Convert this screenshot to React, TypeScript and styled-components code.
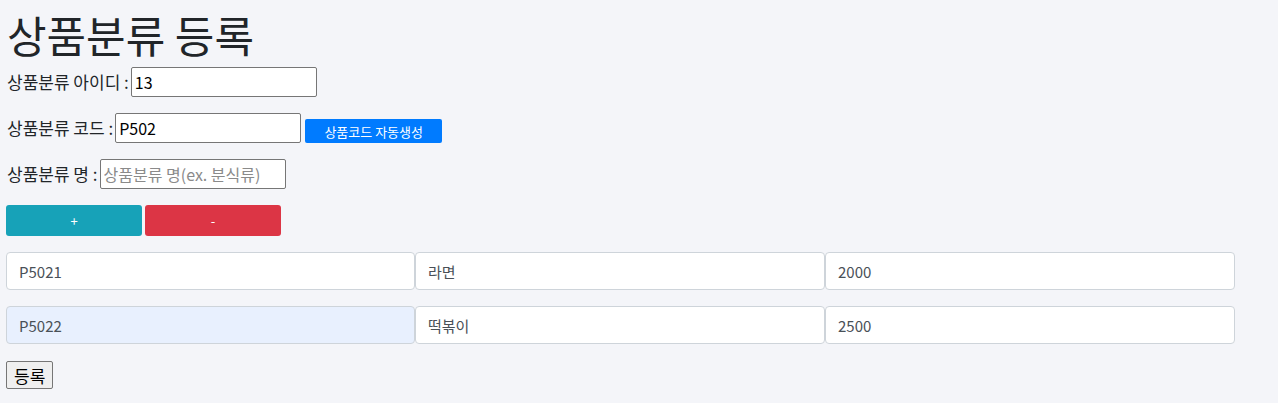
import React from 'react'
import styled, { createGlobalStyle } from 'styled-components'

const GlobalStyle = createGlobalStyle`
    body {
        margin: 0;
        background: #f4f5f9;
        font-family: 'Noto Sans CJK KR', 'Noto Sans', sans-serif;
        color: #212529;
    }
`

const Page = styled.div`
    padding: 0 6px;
    display: flex;
    flex-direction: column;
    align-items: flex-start;
`

const Title = styled.h1`
    margin: 8px 0 0 1px;
    font-size: 43px;
    font-weight: 400;
    line-height: 52px;
    color: #212529;
`

const FieldRow = styled.div<{ gap: number }>`
    display: flex;
    align-items: center;
    margin-top: ${p => p.gap}px;
    padding-left: 1px;
`

const Label = styled.span`
    font-size: 17px;
    line-height: 20px;
    margin-right: 2px;
    color: #212529;
`

const TextInput = styled.input`
    box-sizing: border-box;
    width: 186px;
    height: 30px;
    border: 1px solid #767676;
    border-radius: 2px;
    padding: 1px 3px;
    font-family: 'Noto Sans CJK KR', 'Noto Sans', sans-serif;
    font-size: 16px;
    color: #000;
    background: #fff;
    outline: none;
    &::placeholder {
        color: #8a8a8a;
    }
`

const AutoButton = styled.button`
    align-self: flex-end;
    margin-left: 4px;
    width: 137px;
    height: 24px;
    border: none;
    border-radius: 2px;
    background: #007bff;
    color: #fff;
    font-family: 'Noto Sans CJK KR', 'Noto Sans', sans-serif;
    font-size: 13px;
    padding: 0;
`

const ButtonRow = styled.div`
    display: flex;
    gap: 3px;
    margin-top: 16px;
`

const ActionButton = styled.button<{ tone: string }>`
    width: 136px;
    height: 31px;
    border: none;
    border-radius: 3px;
    background: ${p => p.tone};
    color: #fff;
    font-family: 'Noto Sans CJK KR', 'Noto Sans', sans-serif;
    font-size: 13px;
    padding: 0;
`

const ItemRow = styled.div`
    display: grid;
    grid-template-columns: 409px 410px 410px;
    margin-top: 16px;
`

const ItemInput = styled.input<{ filled?: boolean }>`
    box-sizing: border-box;
    height: 38px;
    border: 1px solid #ced4da;
    border-radius: 4px;
    padding: 0 12px;
    font-family: 'Noto Sans CJK KR', 'Noto Sans', sans-serif;
    font-size: 15px;
    color: #495057;
    background: ${p => (p.filled ? '#e8f0fe' : '#fff')};
    outline: none;
`

const SubmitButton = styled.button`
    margin-top: 17px;
    height: 28px;
    padding: 0 7px;
    border: 1px solid #767676;
    border-radius: 2px;
    background: #efefef;
    color: #000;
    font-family: 'Noto Sans CJK KR', 'Noto Sans', sans-serif;
    font-size: 17px;
`

const items = [
    { code: 'P5021', name: '라면', price: '2000', filled: false },
    { code: 'P5022', name: '떡볶이', price: '2500', filled: true },
]

export default function App() {
    return (
        <Page>
            <GlobalStyle />
            <Title>상품분류 등록</Title>
            <FieldRow gap={7}>
                <Label>상품분류 아이디 :</Label>
                <TextInput defaultValue="13" />
            </FieldRow>
            <FieldRow gap={16}>
                <Label>상품분류 코드 :</Label>
                <TextInput defaultValue="P502" />
                <AutoButton>상품코드 자동생성</AutoButton>
            </FieldRow>
            <FieldRow gap={16}>
                <Label>상품분류 명 :</Label>
                <TextInput placeholder="상품분류 명(ex. 분식류)" />
            </FieldRow>
            <ButtonRow>
                <ActionButton tone="#17a2b8">+</ActionButton>
                <ActionButton tone="#dc3545">-</ActionButton>
            </ButtonRow>
            {items.map(item => (
                <ItemRow key={item.code}>
                    <ItemInput filled={item.filled} defaultValue={item.code} />
                    <ItemInput defaultValue={item.name} />
                    <ItemInput defaultValue={item.price} />
                </ItemRow>
            ))}
            <SubmitButton>등록</SubmitButton>
        </Page>
    )
}
